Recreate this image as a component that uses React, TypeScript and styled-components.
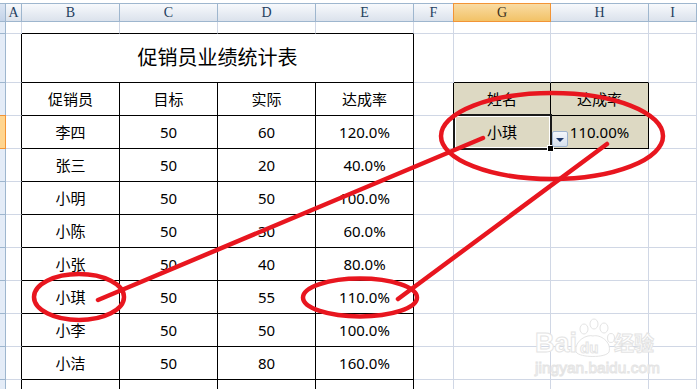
import styled, { createGlobalStyle } from 'styled-components';

const GRID = '#d0d7e5';
const BLACK = '#000';
const HEAD_LINE = '#9eb6ce';
const BEIGE = '#ddd9c3';
const RED = '#e8161f';

const COLS = ['A', 'B', 'C', 'D', 'E', 'F', 'G', 'H', 'I'];
const TABLE_COLS = ['B', 'C', 'D', 'E'];

const DATA = [
    ['李四', '50', '60', '120.0%'],
    ['张三', '50', '20', '40.0%'],
    ['小明', '50', '50', '100.0%'],
    ['小陈', '50', '30', '60.0%'],
    ['小张', '50', '40', '80.0%'],
    ['小琪', '50', '55', '110.0%'],
    ['小李', '50', '50', '100.0%'],
    ['小洁', '50', '80', '160.0%'],
];

const GlobalStyle = createGlobalStyle`
    html, body {
        margin: 0;
        padding: 0;
        background: #fff;
        overflow: hidden;
    }
`;

// text shown in a given cell, keyed by row number then column
function cellText(row: number, col: string): string {
    if (row === 3) {
        const head: Record<string, string> = { B: '促销员', C: '目标', D: '实际', E: '达成率', G: '姓名', H: '达成率' };
        return head[col] ?? '';
    }
    if (row === 4 && col === 'G') return '小琪';
    if (row === 4 && col === 'H') return '110.00%';
    const d = DATA[row - 4];
    if (d && TABLE_COLS.includes(col)) return d[TABLE_COLS.indexOf(col)];
    return '';
}

function rightBorder(row: number, col: string) {
    if (row >= 2 && (col === 'A' || TABLE_COLS.includes(col))) return BLACK;
    if ((row === 3 || row === 4) && ['F', 'G', 'H'].includes(col)) return BLACK;
    return GRID;
}

function bottomBorder(row: number, col: string) {
    if (row >= 1 && TABLE_COLS.includes(col)) return BLACK;
    if (row >= 2 && row <= 4 && (col === 'G' || col === 'H')) return BLACK;
    return GRID;
}

export default function App() {
    const rows = Array.from({ length: 12 }, (_, i) => i + 1);
    return (
        <Frame>
            <GlobalStyle />
            <Sheet>
                <Corner />
                {COLS.map((c) => (
                    <ColHead key={c} $active={c === 'G'}>
                        {c}
                    </ColHead>
                ))}
                {rows.map((r) => (
                    <Row key={r} r={r} />
                ))}
            </Sheet>

            <Selection />
            <FillHandle />
            <DropButton>
                <Arrow />
            </DropButton>

            <Marks viewBox='0 0 697 389' width={697} height={389}>
                <g fill='none' stroke={RED} strokeWidth={4.5} strokeLinecap='round'>
                    <ellipse cx={552} cy={136} rx={111} ry={43} />
                    <ellipse cx={79} cy={297} rx={45} ry={23} />
                    <ellipse cx={360} cy={297.5} rx={57} ry={19} />
                    <line x1={98} y1={300} x2={483} y2={138} />
                    <line x1={398} y1={299} x2={607} y2={144} />
                </g>
                <g fill='#fff' stroke='#e4e4e4' strokeWidth={1}>
                    <text x={535} y={352} fontFamily='Liberation Sans, sans-serif' fontWeight={700} fontSize={27}>
                        Bai
                    </text>
                    <ellipse cx={584} cy={329} rx={4} ry={5} />
                    <ellipse cx={594} cy={324} rx={4} ry={5} />
                    <ellipse cx={604} cy={328} rx={4} ry={5} />
                    <ellipse cx={611} cy={338} rx={3.5} ry={4.5} />
                    <path d='M576 352 C574 340 588 334 593 336 C600 334 612 342 609 352 C606 358 580 358 576 352 Z' />
                    <text x={580} y={353} fontFamily='Liberation Sans, sans-serif' fontWeight={700} fontSize={15}>
                        du
                    </text>
                    <text x={614} y={351} fontFamily='Noto Sans CJK SC, sans-serif' fontWeight={700} fontSize={20}>
                        经验
                    </text>
                    <text x={535} y={373} fontFamily='Liberation Sans, sans-serif' fontSize={15.5}>
                        jingyan.baidu.com
                    </text>
                </g>
            </Marks>
        </Frame>
    );
}

function Row({ r }: { r: number }) {
    return (
        <>
            <RowHead $active={r === 4} />
            {COLS.map((c) => {
                if (r === 2 && TABLE_COLS.includes(c)) {
                    if (c !== 'B') return null;
                    return (
                        <Cell key={c} $span={4} $right={BLACK} $bottom={BLACK} $size={20}>
                            促销员业绩统计表
                        </Cell>
                    );
                }
                const beige = (r === 3 || r === 4) && (c === 'G' || c === 'H');
                return (
                    <Cell key={c} $right={rightBorder(r, c)} $bottom={bottomBorder(r, c)} $bg={beige ? BEIGE : undefined}>
                        {cellText(r, c)}
                    </Cell>
                );
            })}
        </>
    );
}

const Frame = styled.div`
    position: relative;
    width: 697px;
    height: 389px;
    padding-top: 3px;
    box-sizing: border-box;
    overflow: hidden;
    background: #fff;
`;

const Sheet = styled.div`
    display: grid;
    grid-template-columns: 6px 16px 98px 98px 98px 98px 40px 97px 98px 48px;
    grid-template-rows: 19px 12px 49px repeat(10, 33px);
`;

const Corner = styled.div`
    box-sizing: border-box;
    background: linear-gradient(#dbe5f3, #c4d3e8);
    border-top: 1px solid ${HEAD_LINE};
    border-right: 1px solid ${HEAD_LINE};
    border-bottom: 1px solid ${HEAD_LINE};
`;

const ColHead = styled.div<{ $active?: boolean }>`
    box-sizing: border-box;
    display: flex;
    align-items: center;
    justify-content: center;
    padding-top: 1px;
    font-family: 'Liberation Serif', serif;
    font-size: 14px;
    color: ${(p) => (p.$active ? '#3b3221' : '#24405e')};
    background: ${(p) => (p.$active ? 'linear-gradient(#f9dba3, #f2c266)' : 'linear-gradient(#f7f9fc, #dbe2ec)')};
    border-top: 1px solid ${(p) => (p.$active ? '#f29436' : HEAD_LINE)};
    border-right: 1px solid ${(p) => (p.$active ? '#f29436' : HEAD_LINE)};
    border-bottom: 1px solid ${(p) => (p.$active ? '#f29436' : HEAD_LINE)};
    ${(p) => p.$active && 'border-left: 1px solid #f29436; margin-left: -1px;'}
`;

const RowHead = styled.div<{ $active?: boolean }>`
    box-sizing: border-box;
    background: ${(p) => (p.$active ? '#ffd58f' : '#e4ecf7')};
    border-right: 1px solid ${(p) => (p.$active ? '#f29436' : HEAD_LINE)};
    border-bottom: 1px solid ${(p) => (p.$active ? '#f29436' : HEAD_LINE)};
    ${(p) => p.$active && 'border-top: 1px solid #f29436; margin-top: -1px;'}
`;

const Cell = styled.div<{ $right: string; $bottom: string; $bg?: string; $span?: number; $size?: number }>`
    box-sizing: border-box;
    display: flex;
    align-items: center;
    justify-content: center;
    grid-column: span ${(p) => p.$span ?? 1};
    font-family: 'Noto Sans', 'Noto Sans CJK SC', sans-serif;
    font-size: ${(p) => p.$size ?? 15}px;
    line-height: 1;
    color: #000;
    white-space: nowrap;
    background: ${(p) => p.$bg ?? '#fff'};
    border-right: 1px solid ${(p) => p.$right};
    border-bottom: 1px solid ${(p) => p.$bottom};
`;

const Selection = styled.div`
    position: absolute;
    left: 453px;
    top: 114px;
    width: 99px;
    height: 36px;
    box-sizing: border-box;
    border: 2px solid #1a1a1a;
    box-shadow: inset 0 0 0 1px #fff;
`;

const FillHandle = styled.div`
    position: absolute;
    left: 548px;
    top: 146px;
    width: 5px;
    height: 5px;
    background: #000;
    outline: 1px solid #fff;
`;

const DropButton = styled.div`
    position: absolute;
    left: 552px;
    top: 131px;
    width: 16px;
    height: 16px;
    box-sizing: border-box;
    display: flex;
    align-items: center;
    justify-content: center;
    border: 1px solid #9fb4cf;
    border-radius: 2px;
    background: linear-gradient(#f3f6fb, #d6e0ee);
`;

const Arrow = styled.div`
    width: 0;
    height: 0;
    margin-top: 2px;
    border-left: 4px solid transparent;
    border-right: 4px solid transparent;
    border-top: 4px solid #1f3b6e;
`;

const Marks = styled.svg`
    position: absolute;
    left: 0;
    top: 0;
    pointer-events: none;
`;
